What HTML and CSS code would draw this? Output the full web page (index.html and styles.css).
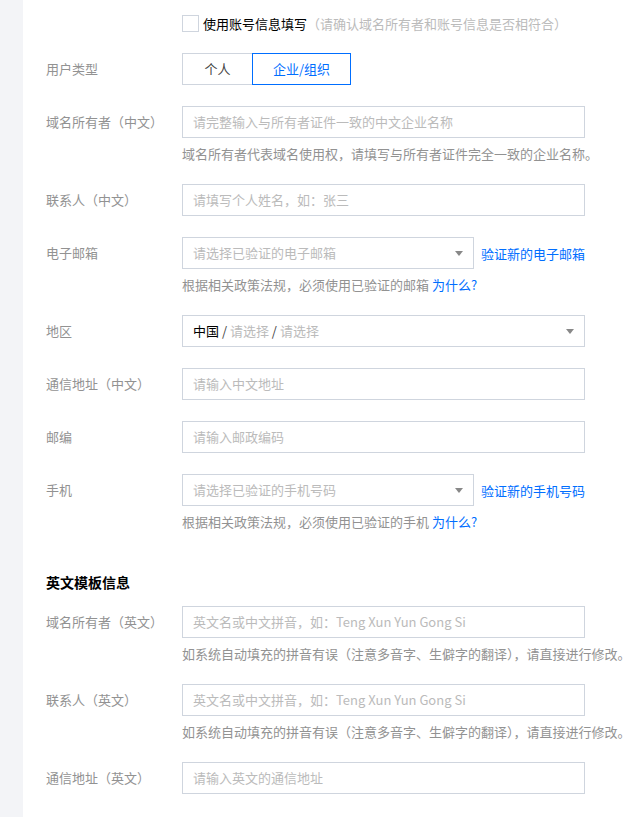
FILE: index.html
```html
<!DOCTYPE html>
<html lang="zh-CN">
<head>
<meta charset="utf-8">
<title>域名信息模板</title>
<link rel="stylesheet" href="styles.css">
</head>
<body>
<div class="page">
  <aside class="side"></aside>
  <main class="form">
    <div class="row row-check">
      <div class="label"></div>
      <div class="field check-line">
        <span class="checkbox"></span>
        <span class="check-text">使用账号信息填写</span>
        <span class="check-tip">（请确认域名所有者和账号信息是否相符合）</span>
      </div>
    </div>

    <div class="row">
      <div class="label">用户类型</div>
      <div class="field segment">
        <span class="seg">个人</span>
        <span class="seg seg-active">企业/组织</span>
      </div>
    </div>

    <div class="row">
      <div class="label">域名所有者（中文）</div>
      <div class="field">
        <div class="input">请完整输入与所有者证件一致的中文企业名称</div>
        <div class="hint">域名所有者代表域名使用权，请填写与所有者证件完全一致的企业名称。</div>
      </div>
    </div>

    <div class="row">
      <div class="label">联系人（中文）</div>
      <div class="field"><div class="input">请填写个人姓名，如：张三</div></div>
    </div>

    <div class="row">
      <div class="label">电子邮箱</div>
      <div class="field">
        <div class="select-line">
          <div class="input select select-short"><span>请选择已验证的电子邮箱</span><i class="caret"></i></div>
          <span class="link">验证新的电子邮箱</span>
        </div>
        <div class="hint">根据相关政策法规，必须使用已验证的邮箱 <span class="link">为什么?</span></div>
      </div>
    </div>

    <div class="row">
      <div class="label">地区</div>
      <div class="field">
        <div class="input select"><span><b class="val">中国</b><span class="sep"> / </span>请选择<span class="sep"> / </span>请选择</span><i class="caret"></i></div>
      </div>
    </div>

    <div class="row">
      <div class="label">通信地址（中文）</div>
      <div class="field"><div class="input">请输入中文地址</div></div>
    </div>

    <div class="row">
      <div class="label">邮编</div>
      <div class="field"><div class="input">请输入邮政编码</div></div>
    </div>

    <div class="row">
      <div class="label">手机</div>
      <div class="field">
        <div class="select-line">
          <div class="input select select-short"><span>请选择已验证的手机号码</span><i class="caret"></i></div>
          <span class="link">验证新的手机号码</span>
        </div>
        <div class="hint">根据相关政策法规，必须使用已验证的手机 <span class="link">为什么?</span></div>
      </div>
    </div>

    <h3 class="section-title">英文模板信息</h3>

    <div class="row">
      <div class="label">域名所有者（英文）</div>
      <div class="field">
        <div class="input">英文名或中文拼音，如：Teng Xun Yun Gong Si</div>
        <div class="hint">如系统自动填充的拼音有误（注意多音字、生僻字的翻译），请直接进行修改。</div>
      </div>
    </div>

    <div class="row">
      <div class="label">联系人（英文）</div>
      <div class="field">
        <div class="input">英文名或中文拼音，如：Teng Xun Yun Gong Si</div>
        <div class="hint">如系统自动填充的拼音有误（注意多音字、生僻字的翻译），请直接进行修改。</div>
      </div>
    </div>

    <div class="row">
      <div class="label">通信地址（英文）</div>
      <div class="field"><div class="input">请输入英文的通信地址</div></div>
    </div>
  </main>
</div>
</body>
</html>
```

FILE: styles.css
```css
html, body {
  margin: 0;
  padding: 0;
  background: #fff;
}

body {
  font-family: "Noto Sans CJK SC", "Noto Sans", sans-serif;
  font-size: 13px;
  color: #000;
}

.page {
  display: flex;
  min-height: 817px;
}

.side {
  flex: none;
  width: 23px;
  background: #f3f4f7;
}

.form {
  flex: 1;
  padding: 7px 0 0 23px;
  overflow: hidden;
}

.row {
  display: flex;
  margin-bottom: 21px;
}

.row-check {
  margin-bottom: 14px;
}

.label {
  flex: none;
  width: 136px;
  line-height: 32px;
  color: #929292;
  white-space: nowrap;
}

.field {
  flex: none;
  width: 403px;
}

.check-line {
  display: flex;
  align-items: center;
  height: 32px;
}

.checkbox {
  box-sizing: border-box;
  width: 17px;
  height: 17px;
  border: 1px solid #cfd5de;
  margin-right: 4px;
}

.check-text {
  color: #000;
}

.check-tip {
  color: #bbb;
  white-space: nowrap;
}

.segment {
  display: flex;
  height: 32px;
}

.seg {
  box-sizing: border-box;
  height: 32px;
  line-height: 30px;
  text-align: center;
  border: 1px solid #cfd5de;
  color: #444;
}

.seg:first-child {
  width: 70px;
  border-right: none;
}

.seg-active {
  width: 99px;
  border-color: #006eff;
  color: #006eff;
}

.input {
  box-sizing: border-box;
  height: 32px;
  line-height: 30px;
  padding: 0 10px;
  border: 1px solid #cfd5de;
  color: #bbb;
  white-space: nowrap;
}

.select {
  display: flex;
  align-items: center;
  justify-content: space-between;
}

.select-line {
  display: flex;
  align-items: center;
}

.select-short {
  width: 294px;
  margin-right: 7px;
}

.caret {
  width: 0;
  height: 0;
  border-top: 5px solid #888;
  border-left: 4px solid transparent;
  border-right: 4px solid transparent;
}

.val {
  font-weight: normal;
  color: #000;
}

.sep {
  color: #444;
}

.link {
  color: #006eff;
  white-space: nowrap;
}

.hint {
  margin-top: 6px;
  line-height: 19px;
  color: #929292;
  white-space: nowrap;
}

.section-title {
  margin: 41px 0 14px;
  font-size: 14px;
  line-height: 20px;
  font-weight: bold;
  color: #000;
}
```
